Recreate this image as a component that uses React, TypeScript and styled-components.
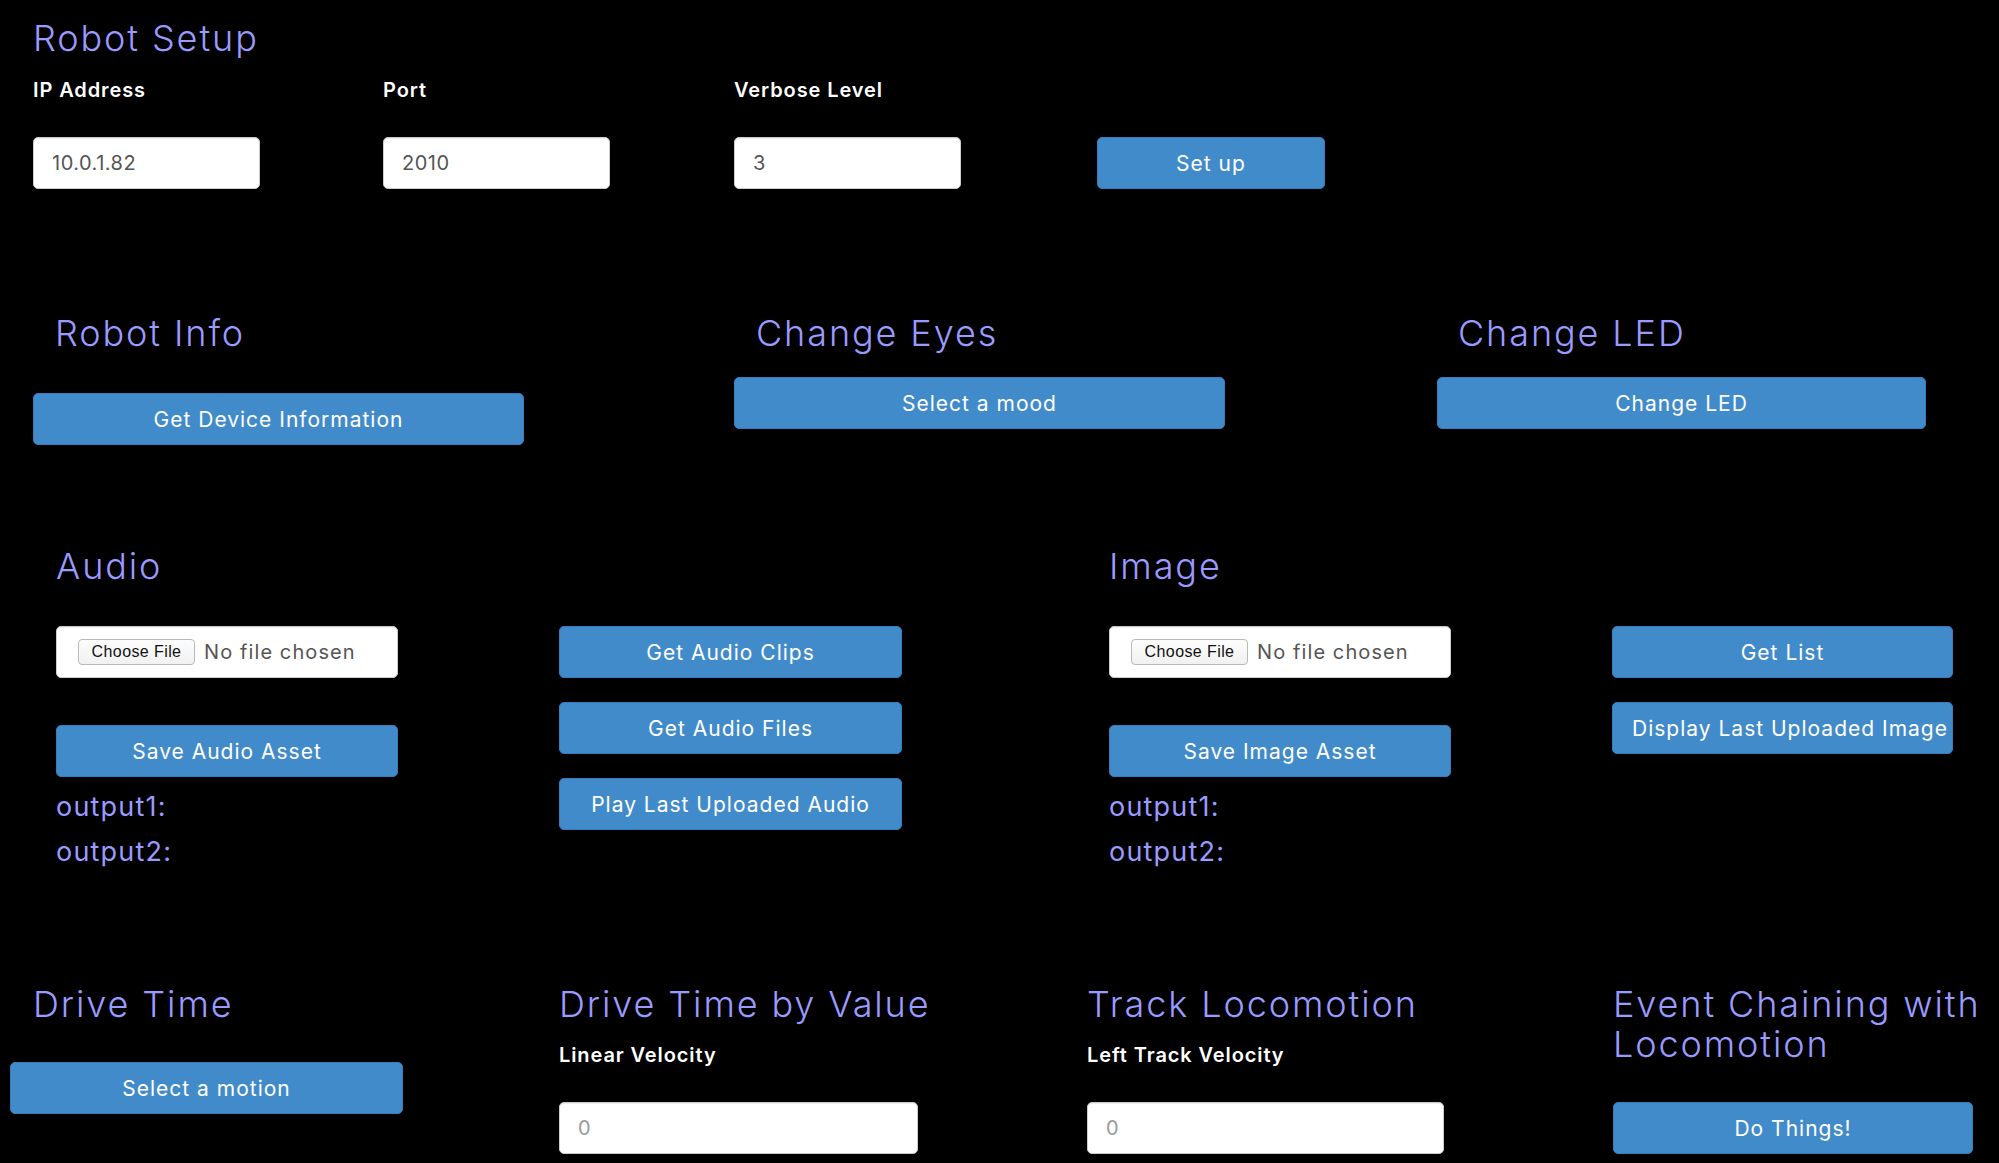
import React from "react";
import styled, { createGlobalStyle } from "styled-components";

const GlobalStyle = createGlobalStyle`
  html, body {
    margin: 0;
    padding: 0;
    background: #000;
    overflow: hidden;
  }
  body {
    font-family: Inter, "Liberation Sans", sans-serif;
    color: #fff;
  }
  *, *::before, *::after { box-sizing: border-box; }
`;

const Page = styled.main`
  width: 1999px;
  min-height: 1163px;
  padding-top: 18px;
  background: #000;
`;

const Title = styled.h3<{ $inset?: number; $max?: number }>`
  margin: 0;
  padding-left: ${(p) => p.$inset ?? 0}px;
  max-width: ${(p) => (p.$max ? `${p.$max}px` : "none")};
  font-family: Inter, "Liberation Sans", sans-serif;
  font-size: 36px;
  line-height: 40px;
  font-weight: 350;
  letter-spacing: 1.9px;
  color: #9a9aff;
`;

const FieldLabel = styled.label`
  display: block;
  font-size: 20px;
  line-height: 24px;
  font-weight: 600;
  letter-spacing: 0.9px;
  color: #fff;
`;

const TextInput = styled.input<{ $width: number }>`
  display: block;
  width: ${(p) => p.$width}px;
  height: 52px;
  margin-top: 35px;
  padding: 0 18px;
  background: #fff;
  border: 1px solid #ccc;
  border-radius: 5px;
  box-shadow: inset 0 1px 1px rgba(0, 0, 0, 0.075);
  font-family: Inter, "Liberation Sans", sans-serif;
  font-size: 20px;
  letter-spacing: 0.5px;
  color: #555;
  outline: none;
  &::placeholder { color: #999; }
`;

const Button = styled.button<{ $width?: number; $top?: number }>`
  display: block;
  width: ${(p) => (p.$width ? `${p.$width}px` : "100%")};
  height: 52px;
  margin-top: ${(p) => p.$top ?? 0}px;
  padding: 0 19px;
  background: #428bca;
  border: 1px solid #357ebd;
  border-radius: 5px;
  color: #fff;
  font-family: Inter, "Liberation Sans", sans-serif;
  font-size: 21px;
  font-weight: 400;
  letter-spacing: 1px;
  white-space: nowrap;
  text-align: center;
  cursor: pointer;
`;

/* ---------- Robot setup ---------- */
const SetupSection = styled.section`
  padding-left: 33px;
`;

const SetupGrid = styled.div`
  display: grid;
  grid-template-columns: 350px 351px 363px 228px;
  align-items: end;
  margin-top: 20px;
`;

const Field = styled.div`
  display: flex;
  flex-direction: column;
`;

/* ---------- Info row ---------- */
const InfoRow = styled.section`
  display: grid;
  grid-template-columns: 701px 703px 489px;
  align-items: start;
  padding-left: 33px;
  margin-top: 124px;
`;

const InfoCol = styled.div<{ $gap: number }>`
  display: flex;
  flex-direction: column;
  gap: ${(p) => p.$gap}px;
`;

/* ---------- Media row ---------- */
const MediaRow = styled.section`
  display: grid;
  grid-template-columns: 1053px 1fr;
  padding-left: 56px;
  margin-top: 101px;
`;

const MediaPanel = styled.div`
  display: flex;
  flex-direction: column;
`;

const PanelGrid = styled.div<{ $right: number }>`
  display: grid;
  grid-template-columns: 342px ${(p) => p.$right}px;
  column-gap: 161px;
  align-items: start;
  margin-top: 40px;
`;

const LeftStack = styled.div`
  display: flex;
  flex-direction: column;
`;

const ButtonStack = styled.div`
  display: flex;
  flex-direction: column;
  gap: 24px;
`;

const FileBox = styled.label`
  display: flex;
  align-items: center;
  height: 52px;
  padding-left: 21px;
  background: #fff;
  border: 1px solid #ccc;
  border-radius: 5px;
  box-shadow: inset 0 1px 1px rgba(0, 0, 0, 0.075);
  cursor: pointer;
`;

const ChooseButton = styled.span`
  display: inline-flex;
  align-items: center;
  justify-content: center;
  width: 117px;
  height: 26px;
  border: 1px solid #b9b9b9;
  border-radius: 4px;
  background: linear-gradient(#fdfdfd, #f1f1f1);
  font-family: "Liberation Sans", Arial, sans-serif;
  font-size: 16px;
  letter-spacing: 0.4px;
  color: #111;
`;

const FileName = styled.span`
  margin-left: 9px;
  font-family: Inter, "Liberation Sans", sans-serif;
  font-size: 20px;
  letter-spacing: 1.1px;
  color: #555;
`;

const Outputs = styled.div`
  margin-top: 7px;
`;

const OutputLine = styled.div`
  font-size: 27px;
  line-height: 45px;
  letter-spacing: 1.2px;
  color: #9a9aff;
`;

/* ---------- Drive row ---------- */
const DriveRow = styled.section`
  display: grid;
  grid-template-columns: 549px 528px 526px 1fr;
  align-items: start;
  padding-left: 10px;
  margin-top: 110px;
`;

const DriveCol = styled.div`
  display: flex;
  flex-direction: column;
`;

const LabelSpacer = styled.div`
  margin-top: 19px;
`;

function FilePicker() {
  return (
    <FileBox>
      <ChooseButton>Choose File</ChooseButton>
      <FileName>No file chosen</FileName>
    </FileBox>
  );
}

export default function App() {
  return (
    <>
      <GlobalStyle />
      <Page>
        <SetupSection>
          <Title>Robot Setup</Title>
          <SetupGrid>
            <Field>
              <FieldLabel>IP Address</FieldLabel>
              <TextInput $width={227} defaultValue="10.0.1.82" />
            </Field>
            <Field>
              <FieldLabel>Port</FieldLabel>
              <TextInput $width={227} defaultValue="2010" />
            </Field>
            <Field>
              <FieldLabel>Verbose Level</FieldLabel>
              <TextInput $width={227} defaultValue="3" />
            </Field>
            <Button $width={228}>Set up</Button>
          </SetupGrid>
        </SetupSection>

        <InfoRow>
          <InfoCol $gap={40}>
            <Title $inset={22}>Robot Info</Title>
            <Button $width={491}>Get Device Information</Button>
          </InfoCol>
          <InfoCol $gap={24}>
            <Title $inset={22}>Change Eyes</Title>
            <Button $width={491}>Select a mood</Button>
          </InfoCol>
          <InfoCol $gap={24}>
            <Title $inset={21}>Change LED</Title>
            <Button $width={489}>Change LED</Button>
          </InfoCol>
        </InfoRow>

        <MediaRow>
          <MediaPanel>
            <Title>Audio</Title>
            <PanelGrid $right={343}>
              <LeftStack>
                <FilePicker />
                <Button $top={47}>Save Audio Asset</Button>
                <Outputs>
                  <OutputLine>output1:</OutputLine>
                  <OutputLine>output2:</OutputLine>
                </Outputs>
              </LeftStack>
              <ButtonStack>
                <Button>Get Audio Clips</Button>
                <Button>Get Audio Files</Button>
                <Button>Play Last Uploaded Audio</Button>
              </ButtonStack>
            </PanelGrid>
          </MediaPanel>
          <MediaPanel>
            <Title>Image</Title>
            <PanelGrid $right={341}>
              <LeftStack>
                <FilePicker />
                <Button $top={47}>Save Image Asset</Button>
                <Outputs>
                  <OutputLine>output1:</OutputLine>
                  <OutputLine>output2:</OutputLine>
                </Outputs>
              </LeftStack>
              <ButtonStack>
                <Button>Get List</Button>
                <Button>Display Last Uploaded Image</Button>
              </ButtonStack>
            </PanelGrid>
          </MediaPanel>
        </MediaRow>

        <DriveRow>
          <DriveCol>
            <Title $inset={23}>Drive Time</Title>
            <Button $width={393} $top={38}>Select a motion</Button>
          </DriveCol>
          <DriveCol>
            <Title>Drive Time by Value</Title>
            <LabelSpacer>
              <FieldLabel>Linear Velocity</FieldLabel>
            </LabelSpacer>
            <TextInput $width={359} placeholder="0" />
          </DriveCol>
          <DriveCol>
            <Title>Track Locomotion</Title>
            <LabelSpacer>
              <FieldLabel>Left Track Velocity</FieldLabel>
            </LabelSpacer>
            <TextInput $width={357} placeholder="0" />
          </DriveCol>
          <DriveCol>
            <Title $max={386}>Event Chaining with Locomotion</Title>
            <Button $width={360} $top={38}>Do Things!</Button>
          </DriveCol>
        </DriveRow>
      </Page>
    </>
  );
}
